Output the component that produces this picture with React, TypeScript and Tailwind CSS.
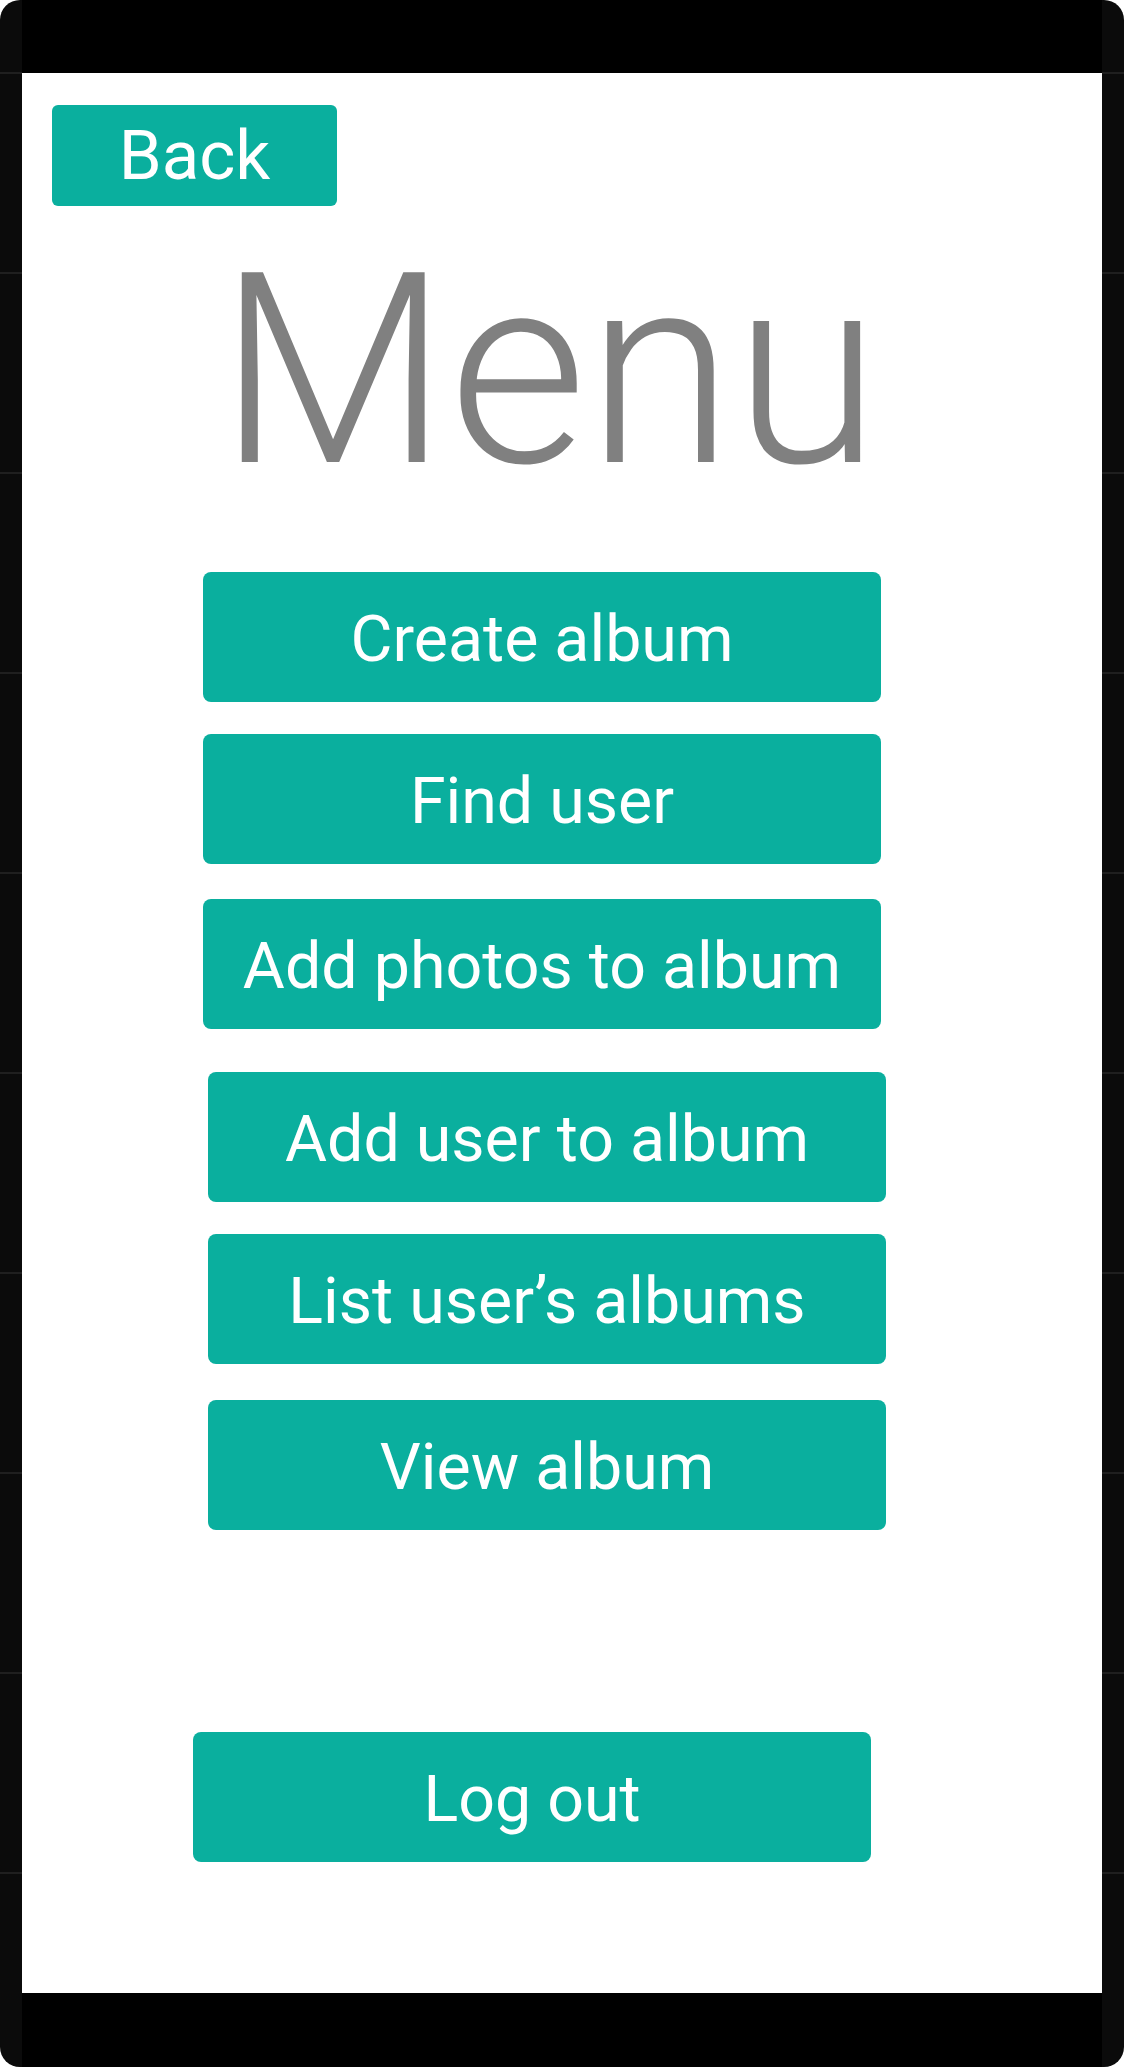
import React from "react";

const lineOffsets = [0, 1, 2, 3, 4, 5, 6, 7, 8, 9];

function SideBar({ side }: { side: "left" | "right" }) {
  return (
    <div
      className={
        "relative w-[22px] h-full bg-[#0b0b0b] overflow-hidden " +
        (side === "left" ? "rounded-l-[20px]" : "rounded-r-[20px]")
      }
    >
      <div className="flex flex-col">
        <div className="h-[72px]" />
        {lineOffsets.map((i) => (
          <div key={i} className="flex flex-col">
            <div className="h-[2px] bg-[#1f1f1f]" />
            <div className="h-[198px]" />
          </div>
        ))}
      </div>
    </div>
  );
}

function MenuButton({ label, offset, mt }: { label: string; offset: string; mt: string }) {
  return (
    <div className={"flex " + offset + " " + mt}>
      <button className="w-[678px] h-[130px] rounded-[8px] bg-[#0aaf9e] text-white text-[64.5px] leading-none flex items-center justify-center pt-[4px]">
        {label}
      </button>
    </div>
  );
}

export default function App() {
  return (
    <div
      className="flex w-[1124px] h-[2067px] bg-white"
      style={{ fontFamily: "Roboto, 'Liberation Sans', sans-serif" }}
    >
      <SideBar side="left" />
      <div className="flex-1 flex flex-col h-full">
        <div className="h-[73px] bg-black" />
        <div className="flex-1 bg-white flex flex-col pt-[32px]">
          <div className="pl-[30px] flex">
            <button className="w-[285px] h-[101px] rounded-[6px] bg-[#0aaf9e] text-white text-[69px] leading-none flex items-center justify-center">
              Back
            </button>
          </div>
          <div className="flex justify-center pr-[26px] mt-[31px]">
            <div className="text-[267px] leading-none font-light text-[#808080] h-[267px]">
              Menu
            </div>
          </div>
          <MenuButton label="Create album" offset="pl-[181px]" mt="mt-[68px]" />
          <MenuButton label="Find user" offset="pl-[181px]" mt="mt-[32px]" />
          <MenuButton label="Add photos to album" offset="pl-[181px]" mt="mt-[35px]" />
          <MenuButton label="Add user to album" offset="pl-[186px]" mt="mt-[43px]" />
          <MenuButton label="List user’s albums" offset="pl-[186px]" mt="mt-[32px]" />
          <MenuButton label="View album" offset="pl-[186px]" mt="mt-[36px]" />
          <MenuButton label="Log out" offset="pl-[171px]" mt="mt-[202px]" />
        </div>
        <div className="h-[74px] bg-black" />
      </div>
      <SideBar side="right" />
    </div>
  );
}
